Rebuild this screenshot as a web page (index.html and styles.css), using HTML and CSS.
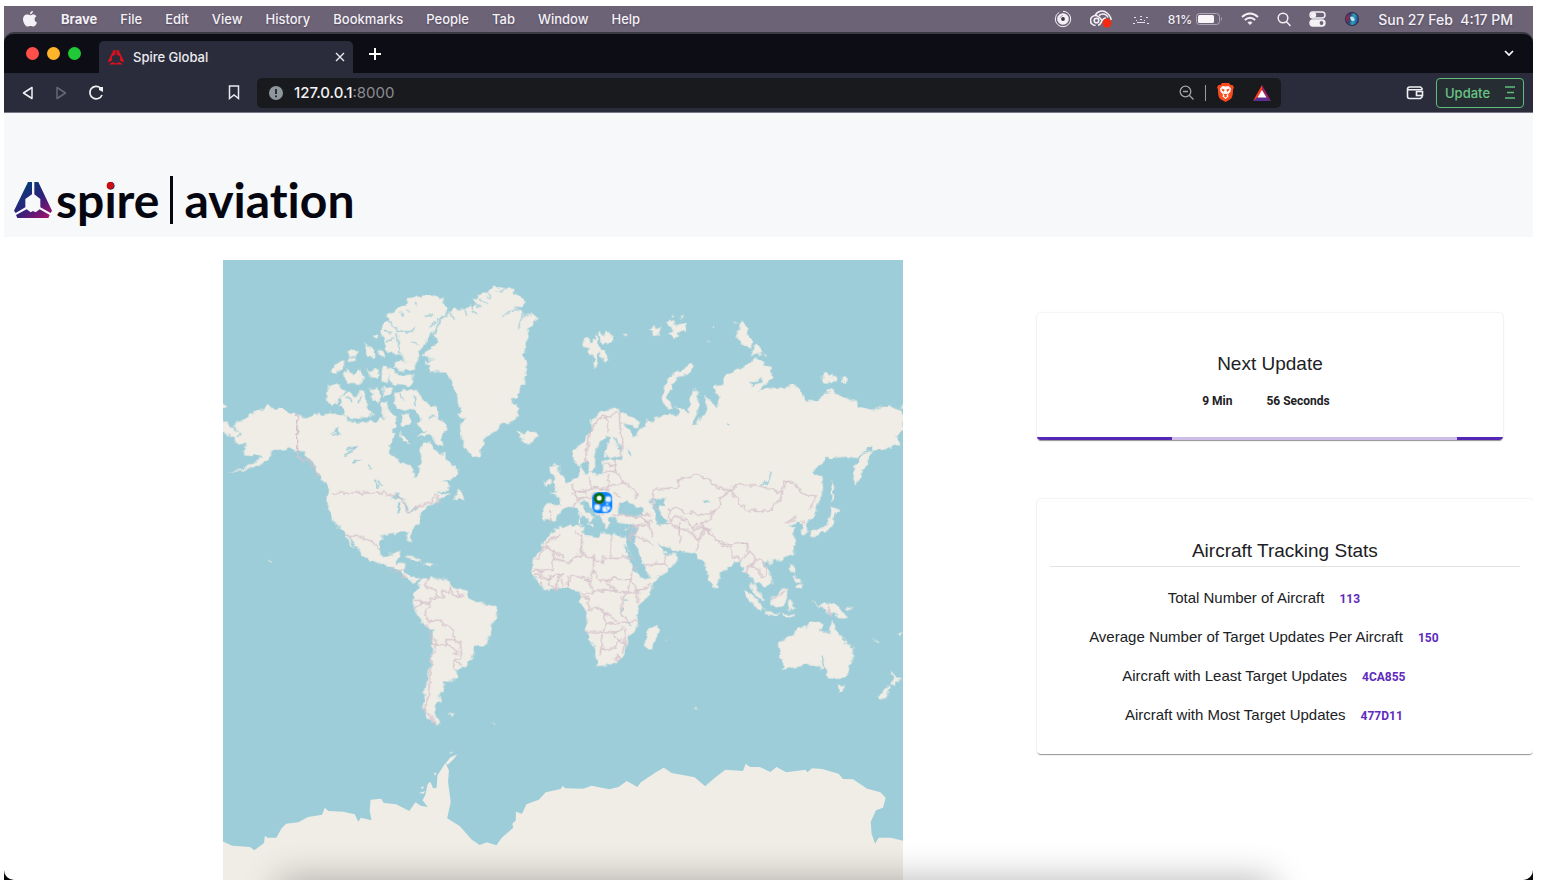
FILE: index.html
```html
<!DOCTYPE html>
<html lang="en">
<head>
<meta charset="utf-8">
<meta name="viewport" content="width=device-width, initial-scale=1">
<title>Spire Global</title>
<link rel="stylesheet" href="styles.css">
</head>
<body>
<div class="screen">
  <header class="menubar">
    <nav class="menus" aria-label="Application menu">
      <svg class="apple" viewBox="0 0 16 18" width="16" height="18" aria-hidden="true"><path fill="#f4f1f6" d="M10.9 1c.1 1.700-1.300 3.300-2.900 3.300C7.800 2.600 9.300 1.100 10.900 1zM8.200 5.300c.7 0 1.600-.8 3-.8 1.300 0 2.500.7 3.200 1.700-2.700 1.600-2.200 5.300.6 6.400-.6 1.700-2 4-3.500 4-1.100 0-1.500-.7-2.900-.7s-1.900.7-2.900.7C3.600 16.600 1 12.700 1 9.300c0-3 1.900-4.700 3.900-4.700 1.400 0 2.500.7 3.300.7z"/></svg>
      <b>Brave</b><span>File</span><span>Edit</span><span>View</span><span>History</span><span>Bookmarks</span><span>People</span><span>Tab</span><span>Window</span><span>Help</span>
    </nav>
    <div class="status">
      <svg width="18" height="18" viewBox="0 0 18 18" fill="none" stroke="#f4f1f6" aria-hidden="true"><circle cx="9" cy="9" r="7.700" stroke-dasharray="32 4" stroke-width="1"/><circle cx="9" cy="9" r="5.800" fill="#f4f1f6" stroke="none"/><circle cx="9" cy="9" r="1.900" fill="#3d3547" stroke="none"/><path d="M9 5.500A3.500 3.500 0 0 0 6 8" stroke="#a59dad" stroke-width="1"/></svg>
      <svg class="cloud" width="24" height="18" viewBox="0 0 24 18" fill="none" stroke="#f4f1f6" stroke-width="1.600" aria-hidden="true"><path d="M5.500 15.500a5 5 0 0 1 0-10C8.500 5.500 10 8 12 10.500M5 6C7 1 13-.5 17 3c2 1.600 4 3.500 4 7M8 15c4 0 3-7 8-7"/><circle cx="6.500" cy="10.500" r="2.300"/><path d="M9 5.500c4-3 8-1 9 2"/><circle cx="17" cy="13" r="4.500" fill="#f52a10" stroke="none"/></svg>
      <svg width="18" height="14" viewBox="0 0 18 14" fill="#e6e1ea" aria-hidden="true"><path d="M1 11h2v1H1zM5 10h8v1H5zM15 11h2v1h-2zM2 5h2v1H2zM8 4h2v1H8zM14 5h2v1h-2z"/><path d="M4 8h1v1H4zM8 7h2v1H8zM12 8h1v1h-1z"/></svg>
      <span class="battery"><small>81%</small><svg width="27" height="12" viewBox="0 0 27 12" aria-hidden="true"><rect x=".5" y=".5" width="23" height="11" rx="3" fill="none" stroke="#aea6b5"/><rect x="2" y="2" width="16" height="8" rx="1.500" fill="#f7f5f8"/><path d="M25 4q2 2 0 4z" fill="#aea6b5"/></svg></span>
      <svg width="18" height="14" viewBox="0 0 18 14" fill="none" stroke="#f4f1f6" stroke-width="1.900" aria-hidden="true"><path d="M1 5q8-7 16 0M3.800 8q5.200-4.600 10.400 0"/><path d="M6.500 10.500Q9 8.500 11.500 10.500L9 13z" fill="#f4f1f6" stroke="none"/></svg>
      <svg width="14" height="15" viewBox="0 0 14 15" fill="none" stroke="#f4f1f6" stroke-width="1.500" aria-hidden="true"><circle cx="6" cy="6" r="4.800"/><path d="m9.500 9.700 4 4.300"/></svg>
      <svg width="17" height="16" viewBox="0 0 17 16" fill="none" stroke="#f4f1f6" stroke-width="1.400" aria-hidden="true"><rect x="1" y="1" width="15" height="6" rx="3"/><rect x="1" y="9" width="15" height="6" rx="3" fill="#f4f1f6"/><circle cx="4.500" cy="4" r="2" fill="#f4f1f6"/><circle cx="12.500" cy="12" r="1.900" fill="#6d6377" stroke="none"/></svg>
      <svg width="16" height="16" viewBox="0 0 16 16" aria-hidden="true"><defs><linearGradient id="siri" x1="0" x2="1" y1=".4" y2=".6"><stop offset="0" stop-color="#b8254e"/><stop offset=".3" stop-color="#3c3a6a"/><stop offset=".6" stop-color="#26a9bd"/><stop offset="1" stop-color="#2645a0"/></linearGradient></defs><circle cx="8" cy="8" r="7" fill="#2b2a4a"/><circle cx="8" cy="8" r="6" fill="url(#siri)"/><path d="M6 6q3-2 5 3-4 3-5-3z" fill="#d9f7f5" opacity=".85"/></svg>
      <time datetime="16:17">Sun 27 Feb&nbsp; 4:17 PM</time>
    </div>
  </header>

  <div class="window">
    <div class="tabstrip">
      <div class="lights" aria-hidden="true"><i class="red"></i><i class="amber"></i><i class="green"></i></div>
      <div class="tab">
        <svg width="16" height="15" viewBox="0 0 32 30" fill="#d8101f" aria-hidden="true"><path d="M15 0v9l-7 4v8l-7 4-1-3L11 0zM17 0v9l7 4v8l7 4 1-3L21 0zM2 29l7-5 7 3 7-3 7 5z"/></svg>
        <span>Spire Global</span>
        <button class="plain" aria-label="Close tab"><svg width="10" height="10" viewBox="0 0 10 10" stroke="#e8e8ee" stroke-width="1.400"><path d="m1 1 8 8M9 1 1 9"/></svg></button>
      </div>
      <button class="plain" aria-label="New tab"><svg width="14" height="14" viewBox="0 0 14 14" stroke="#fff" stroke-width="2"><path d="M7 1v12M1 7h12"/></svg></button>
      <button class="plain more" aria-label="Search tabs"><svg width="10" height="7" viewBox="0 0 10 7" fill="none" stroke="#fff" stroke-width="1.700"><path d="m1 1 4 4 4-4"/></svg></button>
    </div>

    <div class="toolbar">
      <div class="navgroup">
        <button class="plain" aria-label="Back"><svg width="12" height="14" viewBox="0 0 12 14" fill="none" stroke="#f0f0f4" stroke-width="1.500" stroke-linejoin="round"><path d="M10 1.500v11L1.500 7z"/></svg></button>
        <button class="plain" aria-label="Forward"><svg width="12" height="14" viewBox="0 0 12 14" fill="none" stroke="#666775" stroke-width="1.500" stroke-linejoin="round"><path d="M2 1.500v11L10.500 7z"/></svg></button>
        <button class="plain" aria-label="Reload"><svg width="16" height="16" viewBox="0 0 16 16" fill="none" stroke="#f0f0f4" stroke-width="1.700"><path d="M12.500 3A6.300 6.300 0 1 0 14 10"/><path d="M11 2h4v5l-4-2z" fill="#f0f0f4" stroke="none"/></svg></button>
      </div>
      <button class="plain" aria-label="Bookmark this page"><svg width="12" height="15" viewBox="0 0 12 15" fill="none" stroke="#e8e8ee" stroke-width="1.500"><path d="M1.500 1h9v12.500L6 10l-4.500 3.500z"/></svg></button>
      <div class="address">
        <svg width="14" height="14" viewBox="0 0 14 14" aria-hidden="true"><circle cx="7" cy="7" r="7" fill="#8f979e"/><path d="M7 3v5M7 9.500v1.700" stroke="#191a1e" stroke-width="1.700"/></svg>
        <span class="url">127.0.0.1<em>:8000</em></span>
        <svg width="15" height="15" viewBox="0 0 15 15" fill="none" stroke="#a2a3a8" stroke-width="1.300" aria-hidden="true"><circle cx="6.500" cy="6.500" r="5.300"/><path d="M4 6.500h5M10.500 10.500l4 4"/></svg>
        <i class="rule"></i>
        <svg width="17" height="19" viewBox="0 0 34 38" aria-hidden="true"><path fill="#fb4a1d" d="m10 0-3 4H3L0 9l2 4c0 10 1 17 6 20l9 5 9-5c5-3 6-10 6-20l2-4-3-5h-4l-3-4z"/><path fill="#fff" d="m11 6 6 1 6-1 5 5-1 6-5 6 1 4-6 5-6-5 1-4-5-6-1-6z"/><path fill="#fb4a1d" d="m9 11 6 2-1 5-4-3zM25 11l-6 2 1 5 4-3zM12 20l3 2h4l3-2-3 5 1 2-3 2-3-2 1-2z"/></svg>
        <svg width="18" height="16" viewBox="0 0 36 32" aria-hidden="true"><path fill="#ff3d1f" d="M18 0v12L10 25 0 32z"/><path fill="#9a1f63" d="M18 0v12l8 13 10 7z"/><path fill="#5b2e91" d="m0 32 10-8h16l10 8z"/><path fill="#fff" d="m18 10 9 15H9z"/></svg>
      </div>
      <div class="actions">
        <button class="plain" aria-label="Wallet"><svg width="18" height="15" viewBox="0 0 18 15" fill="none" stroke="#f0f0f4" stroke-width="1.600"><path d="M16 5V3.500L14.500 2h-11A2 2 0 0 0 1.500 4v7.500a2 2 0 0 0 2 2h11l1.500-1.500V10.500M2 4.700h14"/><rect x="10.500" y="6.500" width="6" height="4"/></svg></button>
        <button class="update"><span>Update</span><svg width="11" height="13" viewBox="0 0 11 13" stroke="#5fbf7a" stroke-width="1.500" aria-hidden="true"><path d="M1 1h10M3 6.500h7M1 12h10"/></svg></button>
      </div>
    </div>

    <main class="page">
      <div class="brand">
        <svg width="38" height="36" viewBox="0 0 114 108" aria-hidden="true"><defs><linearGradient id="mark" x1=".1" y1=".1" x2=".8" y2="1"><stop offset=".1" stop-color="#063b78"/><stop offset=".55" stop-color="#30217a"/><stop offset="1" stop-color="#97116f"/></linearGradient></defs><path fill="url(#mark)" d="M42 0h12v37L34 51v25L5 93l-5-7zM61 0h12l41 86-4 7-31-17V51L61 37zM38 82l12 9 7-4 8 4 12-9 30 17-4 9H10l-4-9z"/></svg>
        <span class="wordmark">sp<span class="dotted">i</span>re</span>
        <i class="bar"></i>
        <span class="wordmark">aviation</span>
      </div>

      <div class="content">
        <svg class="map" viewBox="223 260 680 620" preserveAspectRatio="xMidYMin slice" role="img" aria-label="World map with aircraft positions">
          <defs><filter id="coast" x="-5%" y="-5%" width="110%" height="110%" color-interpolation-filters="sRGB"><feTurbulence type="fractalNoise" baseFrequency=".05" numOctaves="2" seed="4" result="n"/><feDisplacementMap in="SourceGraphic" in2="n" scale="20" xChannelSelector="R" yChannelSelector="G"/></filter></defs>
          <g transform="translate(220 255) scale(.33333)" stroke-linejoin="round" filter="url(#coast)">
            <g class="land">
              <path d="M690 168l14-8 10 4 8-6 12 7 12-14 12 7 8-8-8-21 16 2 2-12 24-7 8-12 25-4 18 4 28 2-2 12 20 8 17 18-10 12-26 7 28 3 6 18-8 22 16-25 10-5 25 13-15 22-12 9-8 18 4 12-8 18 2 18-8 16 12 26-6 14 2 18-6 10 4 18-20 16-2 24-18 6-2 13 23 17-5 25-20 15-30 8-15 22-18 6-17 19-8 20-7 37-20-7-20-23-15-35-2-40 12-20-18-8 10-15-14-17-1-25-14-45-15-25-45 0-12-12 5-8-18-12 30-5-32-16 22-22 25-13-4-14-11-13 15-25z"/>
              <path d="M590 125l18-4 26 2 31 7 18 28-8 22-14 10-16 25-9 20-21 25-10 26-8 6-4 28-20 16-16-8-8-26-24-8-20-2-12-20-8-27 0-24 5-16 20-10-10-12 18-10 22-21 15-4 5-12z"/>
              <path d="M432 264l30 18 4 24-22-4zM462 240l12-2-2 14-8-2zM390 290l20-6-4 14-18 8zM385 310l20-6 2 12-18 4zM335 350l16-26 22-6-2 14-22 24zM475 280l16 10 0 18-14-2zM365 355l20-12 14 16 14-20 12 8 8 20-16 18-30 2zM438 340l14 10 10-10 14 4-2 30-18-6zM484 330l16 2 8 16-8 34-14-2zM505 340l20 6 4 14 26 0 22-2 2 22-16 10-42-4-14-8zM525 320l34-2 24 8 2 18-44 2-18-8zM448 404l20-6 14 8-4 36-22-6 4-16zM490 396l28 2-6 18-20 12zM485 440l18 0 6 30-20 18-4-22zM545 475l22 2 4 26-22 8zM538 532l18 14 14 18-22-6zM590 500l12 0 2 14-10 0z"/>
              <path d="M325 390l25-2 27 20-17 16-8 15-14 11-20-14z"/>
              <path d="M360 425l25-13 18 12 27-19 9 25 0 25 20 20-14 12-26 0-24 8-12-10-16-6 8-12-16-14 6-14z"/>
              <path d="M525 410l45-8 25 8 8 20 18 15 24 12 8 18-4 14 20 12 13 20-17 18 0 34-22-15-14-18-39 4 28-14-18-20 4-18-22-26-20-2-32-2-10-26z"/>
              <path d="M0 448l14 0 10 6-14 5-10-2zM-10 486l34 18 18 18 25 8-14 10-2 14-18-12-43-16z"/>
              <path d="M115 465l30-13 12 8 28 4 45 14 32 12 38-18 4 8 28-6 16 8 37 2-7 10 32 12 32-2 8-10 12 8 18-12 15 2-4-30 12 0 22 24 4 20-10 20 4 15-8 18-8 14 0 18 12 18 23 12 30 10 8 18 2 18 10 0 5-36 12-10-8-30 4-32 24 2 12 16 8 14 15 10 10-12 8 28 14 14 18 18-4 18-18 6-30 4 22 4 2 22-38 10 42 6-34 16-25 12-30 28 2 20-32 30 5 35-10-5-7-25-38 3-35 7-7 25 5 35 17 5 20-10 20-8-5 18-10 16 30 4-4 26 20 14 22 0 6 6-14 8-20-2-20-20-27-22-40-10-46-16-14-25-38-50 22 48-13-15-24-46-27-20-17-40 2-65-25-35-20-40-30-28-45-12-45 5-12 28-35 18-38 12-50 10 52-18 50-30-10-4-40 0-10-18 14-12-4-10-30 4-4-20 20-2-2-18-18-12 10-14 12-2z"/>
              <path d="M897 530l14 6 16-6 20-2 8 16-16 16-18 6-20-10 10-6-14-4zM990 640l15-18 12 8-6 16 16 22 14 22-10 10-32 8 12-18-10-8 4-16-10-10zM974 692l8-20 12 0 0 16-12 6zM718 700l-20 34 20-4 14 6-6-22z"/>
              <path d="M554 904q20-8 54 14l-22-2zM614 922l24 4-6 6-16-2zM586 929l10 2M646 930l12 0M140 918l12 4-4 6z"/>
            </g>

            <g class="land" transform="translate(0 675)">
              <path d="M592 312l16-16 16 0 16-6 10 8 30 2 10 16 15 8 37 11 4 20 30 10 30 6 20 6 8 18-6 20-16 20-2 30-12 26-32 6-10 36-22 30-30 8 6 18-12 12-26 6-4 28-16 10 8 18-16 18 0 24 16 20-14 4-25-18-10-32 4-44 8-48 12-60 3-76-32-24-28-54 2-30 20-20z"/>
              <path d="M688 701l14-3-2 6-14 2zM818 725l8 5-4 2z"/>
            </g>

            <g transform="translate(1020 0)">
              <g class="land">
                <path d="M180 465l-14-8-12 4-24 4-20 12-18 22 3 25-16 20-14 24-27 18 4 38 18 8 14-12 8 6 4 30 18-16 1-40 12-35 24-25 12 4-12 28-8 30 12 8 18-6 27-6-12 14-44 3-6 12 2 28-22 4-12-6-20 6-14-28-6 30-24 16-20 18-15 5-8 8-20 4 28 12 4 28-46-6-6 10 2 36 18 7 22-5 8-24 14-12 18-4 22 12 32 26 0 12 16-18-24-16-16-26 16-8 18 26 22 18 14 22 4 18 8-2 4-30 22 0-2 12 32 8 24-2 6 16-6 42 46 107 42-14 45-44-18-18-18 8-28-38 20 8 30 14 55 6 25 22 15 20 8 36 15 30 14-25 3-20 45-35 16-2 14 30 12 4 16 22 14 34 20 28-18-6-14-30-2-18 16 0 16 14 24-14-6-36-20-22 12-10 28 4 38-20 18-30-10-34 12-20-22 0 20-18 18 10 2 30 14-2-1-30 26-30 8-30 14-24 0-50-20-12-12-8 42-42 66-4 28 4 44-38 0 14-12 32-20 40-14 35-10-20 4-40 28-36 26-6 36-6 46-18-14-22 24-20 0-56-44-14-34 4-12 10-44-10-6-18-46-14-26-16-22 4-20 20-38 6-12-32-24-18-26 10-48-2-32 6 38-34 2-30-26-14-20-22-18 22-14 4-22 12-44 22-6 26-26 4 14 28 0 34-40-32 10 48-18 6-18 34-12-2 20-42-2-56-10-12-16 36-2 40-40-22 14 22-52 6-34 20-36 24-14 22-20-22-16-26 44 20 8-18-30-22-28-10z"/>
                <path d="M303 438l8-40 18-36 28-16 32-16 12 4-8 12-22 16-22 6-22 40-6 26 14 24-12 0-18-14zM258 494l12 6 2 20-10 4zM284 486l8-2 2 6-8 4z"/>
                <path d="M70 252l16 0 6 14 16-24 4 26 16 16 16 22 4 12-16 2-18-32-8 50-10-14 8-16-22-20 8-6-20-8zM114 232l18 6 4-8 26 16-8 16-18 6-20-16zM188 236l12 2-8 6zM266 222l16-8 4 8 14-4-2 18-20 4-2-12zM318 206l16-14 8 20 24-6 14 0-6 18-20 8-12 16-18-10 16-14zM336 178l10 4-6 4zM362 182l10 4-8 4zM456 213l8 2-4 5zM440 256l10 4-5 3z"/>
                <path d="M530 242l10-34 12-8 12 18-2 20 14 18-4 22-30-12-6-16-10-2zM572 304l10-32 10-8 14 28-10 6-16 0zM520 202l10 4-6 4zM608 296l12 4-6 3zM788 352l14 0 2 8 12-6-2 14 12-4 2 14-20 2-4 6-16-6zM838 370l18 0 8 10-18 2zM804 402l12 0 6 10-14 0zM1030 444l-8 12 8 2z"/>
              </g>
              <g class="land" transform="translate(0 675)">
                <path d="M70 138l-14-4-36 4-20 2-20 12-26 30-14 30-22 23-3 50 25 30 15 14 10 3 18-8 34 0 42 8 2 14-4 18 22 32 0 24-4 24 22 46 17 68 8 2 44-8 28-38 8-42 30-26-2-60 32-40 32-56-16 2-27 6-18-36-34-66 0-28-76-8-10 14-18-4-20-4-10-14z"/>
                <path d="M290 430l5 20-20 57-16 0-4-28 8-26zM464 306l10 16-8 6-6-10zM54 100l8-4 0 18-6 0zM54 118l8 0-2 12-6 0zM80 133l20-2-2 10zM130 140l16 4-10 2zM194 145l10-3-6 8z"/>
                <path d="M652 490l32-18 16-8 10-20 16-6 16 4 8-14 18-2 18 6-6 16 26 14 2-26 8-16 10 20 8 22 22 20 20 22 2 30-12 32-8 28-28 2-28-10-12-26-8 12-4-14-30-6-38 8-42 8 2-12-10-32zM830 612l10 5 10-4-4 20-8 0zM992 570l14 20 14 4-14 22-12-6 4-12zM994 614l-20 38-14 6-8-6 20-20 8-12z"/>
                <path d="M548 330l18 6 30 28 14 22-4 6-20-12-20-22zM570 305l16 18 10 24-8-2-16-20zM626 354l18-4 24-26 12 6 0 24-12 24-12 2-20-6zM610 394l20 0 30 8-10 4-34-4zM665 402l20 2 18 0-2 8-28-2zM684 362l22 4-12 8 12 12-10 0-6-8-2 12-6-2zM750 360l18 6 6 12 12-8 30 0 26 16 20 30-24-6-20-12-18 2-2-12-22-6-10-14zM692 252l10 6 2 22-12-8zM706 314l18-2 0 14-12-4zM696 286l22 8 4 14-16-4zM690 222l4-12 8 0-4 20zM624 244l12-2 2 8-10 2zM748 156l50-18 12-30-2-28 20 4 8 6-16 16 0 18-10 18-26 16-32 14-6-6zM813 0l8 20-2 40-6 4zM856 385l22-4-14 12zM940 474l16 12-6 2zM316 480l10-2-4 4zM400 680l8 1-4 5zM1030 450l-16 10 4 8z"/>
              </g>
            </g>

            <g class="water">
              <path d="M690 172l10 20M735 165l6 20M752 152l16 30M760 142l24 16M778 135l22 14M845 182l34-16 28-4M895 220l14-45M920 165l10 18M800 115l10 15M830 108l30-5" fill="none" stroke-width="4"/>
              <path d="M506 190q15 35 40 40 30 4 40-14M530 235l10 60M570 262l26 6M610 185l30-8M560 165l12 6M655 190l-24 26M495 225l16 6M497 260l24-12M540 170l8 14M585 140l5 12" fill="none" stroke-width="4"/>
              <path d="M330 536l18-12 8-6-8 12 14 2-12 6-12 6M372 600l20-8 18-18-16 6-12 4M400 620l20-5M448 630l4 12M464 676l10 24M474 676l8 18M540 410l6 26M580 420l6 30M640 480l-14 10M380 425l16 16M420 425l-6 22" fill="none" stroke-width="5"/>
              <path d="M508 728l28-12 12 8 8 10-22-6-24 4zM534 742l8 0-2 32-8-8zM552 738l14 20-8 8zM558 772l24-10 16-8-14 14-20 6z"/>
              <path d="M1196 745l20-7 10 6 18 5 22 16-2 14-42 2-28-4zM1294 750l18-18 20 1 2 16-20 5 6 20 20 20-4 18-22-6-6-20zM1208 870l10 5 36 58 18 32-10 0-24-26-10-28zM1588 382l8 2 12-8 20-4-6 10-20 6-8 8z"/>
              <path d="M1650 654q-4 28-26 36M1524 502l6 8M1448 740l20-3M1454 742l14-2M1212 1035l12 0M1202 1055l2 22M1224 1098l4 14M1806 1204l4 40M1222 580l8 20M1195 570l12 22M1180 545l20 30M1285 735l30 2" fill="none" stroke-width="5"/>
            </g>

            <g class="borders">
              <path d="M231 478V602l20 14 10-6 34 46-10 12M334 714h160l28 8 22 4 20 46 36-20 36-12 8-24 8 8 4 22M368 838l28 4 26 2 24 14 12 0 18 26M512 950l6-16 8 0M526 955l28-12M545 965l10-6"/>
              <g transform="translate(0 675)"><path d="M624 292l-8 28 30 8 4 24 18-4 0-14 18 2 4-20M690 324l10 24 32-2M716 330l-4 20M650 352l-18 4 0 20-24-12-26-8M606 364l-26 22M632 380l-20 14 8 22 16 8 22-6 8 10 24 14 14 28 0 8-26 0-2 16-40 0-10-40-2-26M676 488l40 26-4 8-14 0M700 474l16 12 8 28-4 20-14 4 22 20M706 536l-4 32M638 464l10 26-14 48-6 60-4 60-12 30 24 20 4 22M982 96l10 0-4 38M940 235l14 0 12-30 16-6 0-14 38-22M998 212l0 58-42 0M982 198l16 14 34 24M940 270l18 2 6 22 22 0 0 20 26 12 0-20 12-30M942 286l12-2 0 12M962 306l10 14"/></g>
              <g transform="translate(1020 0)"><path d="M76 626l2-36 12-60 20-36 18-12 14 6 2 42M144 490l22-18 12 2 2 60 8 42-10 28M168 608l-2 42-34-4M132 628l36 6M165 650l20 18 6 18-44 6M142 660l4 20-6 26-48-8-4-28M92 698l-28 12-22 0-8-20M148 692l42-6 44 26-14 20M45 710l0 18 22-4 24 4 10-14M66 728l-20 14-8 16M276 718l10-16 66-4 2-22 36-10 14-8 32 10 28 26 44 12M276 718l0 24 14 20M508 706l26-18 30 4 34 0 32 10 36 12 12-36 22 4 28 34 40 10-20 40M666 714l-6 22-24 22-32 12-50-6-44-58M508 706l-28 22-2 26-18 14-36 14-26-10-26 4-24-18-22 8M324 764l4 38 20-20 32 14 16 24 20-12M356 834l4-36M460 768l-8 24-28 12 6 20 20 10"/>
                <g transform="translate(0 675)"><path d="M162 105l80 4 20 24-46 4M242 100l34 8M250 120l26 4M262 134l20 40M235 135l-12 30-14 2M216 140l-6 48M222 165l58 30M318 132l38 10 4 48M356 142l36 14 34-18M392 156l20 22 16-30 24 0M404 215l14-34 16-30M430 138l22 22 26 32 36 10M462 178l48 16 26-4 22-4 6 28-10 16-12 14-10-12-18-6-4-20M568 210l18 26 18 0 18 46-20 12-8-28-30-10-8 20M586 236l-12 22M604 236l14 30M630 360l30-14 18-22M808 375l0 36M252 260l54-12 20-26M302 248l24 10M676 132l34-22M720 125l16-2M48 150l16 30 4 34M64 166l0 52 66 32 0-18M150 165l0 66 68 2M130 232l20-2M-20 230l38 20 48-30M100 224l0 50-18 22-48-10-12 34M66 300l26 0 6 40-36 2M100 276l22 28 36-8 46 2 16-30 10-12M92 335l52-6 46 10 12-4 8-44M210 300l24 34-30 4-14 10-4 26M136 300l30 30M234 334l42-22M234 334l0 36M182 374l0 22 24 28 30 2M80 388l32-6 26 20 36 20M134 400l0 58-54 0M134 430l18-4 20 8 34-10M134 458l28 0 28-14M126 460l-6 68M120 500l30 12 38-40M162 460l18 28 14 0M194 445l0 50-8 20M164 530l8-4 6 10-8 8-8-6zM22 290l0 32M-35 295l20-10 22-4M-10 296l0 32M6 296l4 24M62 350l20 4 2 30"/><path d="M100 20l26 8 16-14M34 40l24-6 24 6M46 58l26-2M130 104l-20-10M156 108l8-8M160 36l20 16M180 64l-10 14"/></g>
              </g>
            </g>
          </g>

          <path class="ice" transform="translate(220 700) scale(.44 .3333)" d="M0 420L8 424 28 436 68 440 78 450 100 428 102 406 108 412 128 412 140 384 150 370 178 366 200 350 232 343 238 322 246 332 280 334 306 342 314 364 320 352 344 360 340 330 342 298 366 295 372 308 400 312 430 332 444 306 456 316 472 320 460 300 466 285 472 250 478 244 484 264 492 262 494 225 512 188 520 210 518 245 524 305 516 354 545 378 572 418 590 434 606 426 628 435 640 412 666 382 664 370 672 360 672 334 686 340 696 312 724 298 740 276 774 266 778 256 784 264 825 265 844 256 884 267 905 260 924 242 948 260 956 246 990 216 1008 202 1026 218 1078 231 1102 258 1124 232 1148 208 1188 212 1194 190 1204 200 1226 200 1250 215 1264 200 1286 216 1330 208 1334 216 1345 204 1368 206 1405 220 1415 236 1438 237 1470 265 1500 276 1512 292 1506 322 1490 330 1478 365 1480 400 1488 430 1496 412 1524 412 1560 424V960H0Z"/>
          <path class="ice" transform="translate(220 700) scale(.44 .3333)" d="M513 188l10-16 16-10-8 14-14 18zM520 158l12-5-8 7zM486 216l6 4-4 6zM455 262l8-4-2 8zM452 278l14-6-4 8z"/>

          <g class="aircraft">
            <rect x="592" y="492" width="20" height="21" rx="6"/>
            <circle cx="608" cy="499" r="3"/><circle cx="597" cy="507" r="3"/><circle cx="605" cy="509" r="3"/><circle cx="608" cy="508" r="2"/><circle cx="607" cy="504" r="1"/>
            <circle class="warn" cx="599" cy="499" r="4"/><circle class="active" cx="599" cy="498" r="4"/>
          </g>
        </svg>

        <aside class="side">
          <section class="card next">
            <h2>Next Update</h2>
            <p class="countdown"><strong>9 Min</strong><strong>56 Seconds</strong></p>
            <div class="progress" role="progressbar" aria-label="Time to next update"><i></i><i></i></div>
          </section>
          <section class="card stats">
            <h2>Aircraft Tracking Stats</h2>
            <dl>
              <div><dt>Total Number of Aircraft</dt><dd>113</dd></div>
              <div><dt>Average Number of Target Updates Per Aircraft</dt><dd>150</dd></div>
              <div><dt>Aircraft with Least Target Updates</dt><dd>4CA855</dd></div>
              <div><dt>Aircraft with Most Target Updates</dt><dd>477D11</dd></div>
            </dl>
          </section>
        </aside>
      </div>
      <div class="dock-shadow" aria-hidden="true"></div>
    </main>
  </div>
</div>
</body>
</html>
```
FILE: styles.css
```css
* { box-sizing: border-box; }
body { margin: 0; padding: 6px 9px 6px 4px; background: #fff; font-family: Inter, "Liberation Sans", sans-serif; }
h2, p, dl, dd { margin: 0; }
svg { display: block; flex: none; }
button { font: inherit; }

.screen { display: flex; flex-direction: column; height: calc(100vh - 12px); overflow: hidden; background: linear-gradient(#6d6377 50%, #08080c 50%); }

.menubar { display: flex; justify-content: space-between; align-items: center; height: 26px; padding: 0 20px 0 18px; color: #f4f1f6; font-size: 13px; font-weight: 500; text-shadow: 0 1px 2px rgba(30, 20, 40, .35); white-space: nowrap; }
.menus, .status { display: flex; align-items: center; }
.menus { gap: 23px; }
.menus b { font-weight: 700; }
.status { gap: 18px; }
.status time { font-size: 14px; }
.battery { display: flex; align-items: center; gap: 4px; }
.battery small { font-size: 12px; }

.window { flex: 1; min-height: 0; display: flex; flex-direction: column; overflow: hidden; border-radius: 10px; background: #0d0d15; border-top: 2px solid #3b3940; }
.plain { display: flex; padding: 0; border: 0; background: none; }

.tabstrip { display: flex; align-items: center; height: 39px; padding-right: 19px; }
.lights { display: flex; gap: 8px; width: 95px; padding-left: 22px; }
.lights i { width: 13px; height: 13px; border-radius: 50%; }
.red { background: #ff4f4b; }
.amber { background: #ffb429; }
.green { background: #1fc937; }
.tab { display: flex; align-items: center; align-self: flex-end; gap: 9px; width: 254px; height: 32px; margin-right: 15px; padding: 0 8px 0 9px; border-radius: 5px 5px 0 0; background: #2b2c3b; color: #ececf1; font-size: 13px; font-weight: 500; }
.tab .plain, .more { margin-left: auto; }

.toolbar { display: flex; align-items: center; height: 40px; padding: 0 9px 0 18px; background: #2b2c3b; border-bottom: 1px solid #77778a; }
.navgroup { display: flex; align-items: center; gap: 21px; width: 206px; }
.address { display: flex; align-items: center; flex: 1; gap: 11px; height: 30px; margin-left: 17px; padding: 0 10px 0 12px; border-radius: 5px; background: #191a1e; color: #f2f2f4; }
.url { flex: 1; font-size: 15px; font-weight: 500; }
.url em { color: #8b8c91; font-style: normal; font-weight: 400; }
.rule { width: 1px; height: 16px; background: #9b9ca2; }
.address svg:last-child { margin-left: 8px; }
.actions { display: flex; align-items: center; justify-content: flex-end; gap: 12px; width: 243px; }
.update { display: flex; align-items: center; justify-content: space-between; width: 88px; height: 30px; padding: 0 8px; border: 1px solid #5fbf7a; border-radius: 4px; background: #262e33; color: #6ac585; font-size: 13px; font-weight: 500; }

.page { position: relative; flex: 1; min-height: 0; display: flex; flex-direction: column; overflow: hidden; background: #fff; }
.brand { display: flex; align-items: center; gap: 4px; height: 124px; padding: 50px 10px 0; background: #f7f8fa; color: #05060f; }
.wordmark { font: 700 48px/56px Lato, sans-serif; font-variant-ligatures: none; }
.dotted { position: relative; }
.dotted::after { content: ""; position: absolute; left: 3px; top: 11px; width: 7px; height: 7px; border-radius: 50%; background: #cf0b16; }
.bar { width: 3px; height: 48px; margin: 0 7px; background: #05060f; }

.content { flex: 1; min-height: 0; display: grid; grid-template-columns: 680fr 496fr; column-gap: 10.2%; padding: 23px 0 0 14.3%; }
.map { width: 100%; height: 100%; min-height: 0; background: #9dcdd9; }
.land path { fill: #f0ede6; stroke: #dfe5df; stroke-width: 1; }
.ice { fill: #f0ede6; }
.water path { stroke: #9dcdd9; }
.water path:not([fill]) { fill: #9dcdd9; }
.borders path { fill: none; stroke: #d5c2cc; stroke-width: 4; }
.aircraft rect { fill: #0a84ff; }
.aircraft circle { fill: #e5f3ff; stroke: #7dbcff; }
.aircraft .warn { fill: #fff; stroke: #d33; stroke-width: 2; }
.aircraft .active { fill: #fff; stroke: #0a6b12; stroke-width: 3; }

.side { display: flex; flex-direction: column; align-items: flex-start; padding-top: 53px; gap: 59px; }
.card { border-radius: 4px; background: #fff; box-shadow: 0 2px 1px -1px rgba(0, 0, 0, .3), 0 1px 1px rgba(0, 0, 0, .14), 0 0 2px rgba(0, 0, 0, .15); color: #202124; text-align: center; overflow: hidden; }
.card h2 { font: 400 19px/24px "Liberation Sans", Arial, sans-serif; }
.next { width: 94%; padding-top: 39px; }
.countdown { display: flex; justify-content: center; gap: 34px; padding: 17px 8px 28px 0; font: 12px/16px Roboto, sans-serif; }
.progress { display: flex; justify-content: space-between; height: 3px; background: #cdbde6; }
.progress i { width: 10%; background: #5527b5; }
.progress i:first-child { width: 29%; }
.stats { width: 100%; padding: 40px 13px 20px; }
.stats h2 { padding-bottom: 3px; border-bottom: 1px solid #e2e2e2; }
.stats dl { padding: 11px 42px 0 0; }
.stats dl div { display: flex; align-items: center; justify-content: center; gap: 15px; height: 39px; }
.stats dt { font: 15px/20px "Liberation Sans", Arial, sans-serif; }
.stats dd { padding-top: 3px; color: #5f2bbd; font: 700 12px/16px Roboto, sans-serif; }

.dock-shadow { position: absolute; left: 18%; right: 17%; bottom: -40px; height: 40px; box-shadow: 0 0 36px rgba(0, 0, 0, .3); }
```
